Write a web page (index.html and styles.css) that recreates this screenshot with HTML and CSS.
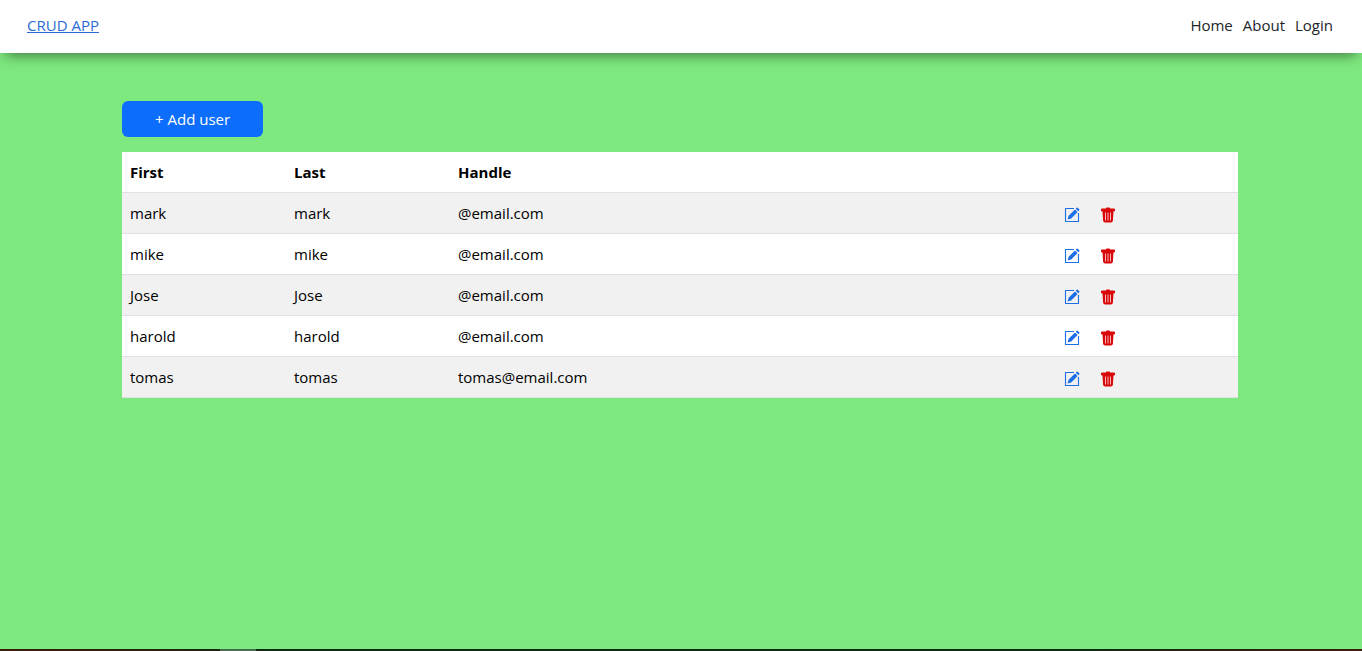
FILE: index.html
```html
<!DOCTYPE html>
<html lang="en">
<head>
<meta charset="utf-8">
<title>CRUD APP</title>
<link rel="stylesheet" href="styles.css">
</head>
<body>
<svg class="sprite" aria-hidden="true">
  <symbol id="edit" viewBox="0 0 16 16">
    <path d="M10 1.500H1.500v13h13V6" fill="none" stroke="currentColor" stroke-width="1.100" stroke-linejoin="round"/>
    <path d="M3.600 12.400l1-3.600L11 2.400l2.600 2.600-6.400 6.400zM11.700 1.700l1-1q.5-.4 1 0l1.600 1.600q.4.500 0 1l-1 1z" fill="currentColor"/>
  </symbol>
  <symbol id="trash" viewBox="0 0 16 16">
    <path d="M2 1.500h3.800q.2-1 1.200-1h2q1 0 1.200 1H14q1 0 1 1v1q0 1-1 1h-.5l-.6 9q-.1 2-2 2H5.100q-1.900 0-2-2l-.6-9H2q-1 0-1-1v-1q0-1 1-1z" fill="currentColor"/>
    <path d="M5.500 5.500v8M8 5.500v8M10.500 5.500v8" stroke="#f3b5b5" stroke-width="1"/>
  </symbol>
</svg>
<header class="navbar">
  <a class="brand" href="#">CRUD APP</a>
  <nav class="links">
    <a href="#">Home</a>
    <a href="#">About</a>
    <a href="#">Login</a>
  </nav>
</header>
<main class="content">
  <button class="add" type="button">+ Add user</button>
  <table class="users">
    <colgroup><col class="name"><col class="name"><col><col class="actions"></colgroup>
    <thead>
      <tr><th>First</th><th>Last</th><th>Handle</th><th></th></tr>
    </thead>
    <tbody>
      <tr><td>mark</td><td>mark</td><td>@email.com</td><td><div class="tools"><button class="edit" type="button" aria-label="Edit mark"><svg><use href="#edit"/></svg></button><button class="remove" type="button" aria-label="Delete mark"><svg><use href="#trash"/></svg></button></div></td></tr>
      <tr><td>mike</td><td>mike</td><td>@email.com</td><td><div class="tools"><button class="edit" type="button" aria-label="Edit mike"><svg><use href="#edit"/></svg></button><button class="remove" type="button" aria-label="Delete mike"><svg><use href="#trash"/></svg></button></div></td></tr>
      <tr><td>Jose</td><td>Jose</td><td>@email.com</td><td><div class="tools"><button class="edit" type="button" aria-label="Edit Jose"><svg><use href="#edit"/></svg></button><button class="remove" type="button" aria-label="Delete Jose"><svg><use href="#trash"/></svg></button></div></td></tr>
      <tr><td>harold</td><td>harold</td><td>@email.com</td><td><div class="tools"><button class="edit" type="button" aria-label="Edit harold"><svg><use href="#edit"/></svg></button><button class="remove" type="button" aria-label="Delete harold"><svg><use href="#trash"/></svg></button></div></td></tr>
      <tr><td>tomas</td><td>tomas</td><td>tomas@email.com</td><td><div class="tools"><button class="edit" type="button" aria-label="Edit tomas"><svg><use href="#edit"/></svg></button><button class="remove" type="button" aria-label="Delete tomas"><svg><use href="#trash"/></svg></button></div></td></tr>
    </tbody>
  </table>
</main>
<footer class="edge"></footer>
</body>
</html>
```
FILE: styles.css
```css
* { box-sizing: border-box; }

body {
  display: flex;
  flex-direction: column;
  min-height: 100vh;
  margin: 0;
  background: #7ee97e;
  color: #000;
  font: 15px/24px "Segoe UI", "Open Sans", sans-serif;
}

.sprite {
  position: absolute;
  width: 0;
  height: 0;
}

.navbar {
  display: flex;
  justify-content: space-between;
  padding: 13px 29px 16px 27px;
  background: #fff;
  box-shadow: 0 7px 14px -5px rgba(0, 0, 0, 0.5);
}

.brand { color: #2a6bd8; }

.links {
  display: flex;
  gap: 10px;
}

.links a {
  color: #212529;
  text-decoration: none;
}

.content {
  flex: 1;
  padding: 48px 124px 48px 122px;
}

.add {
  display: block;
  margin-bottom: 15px;
  padding: 6px 33px;
  border: 0;
  border-radius: 6px;
  background: #0d6efd;
  color: #fff;
  font: inherit;
}

.users {
  width: 100%;
  table-layout: fixed;
  border-collapse: separate;
  border-spacing: 0;
  background: #fff;
}

.name { width: 164px; }
.actions { width: 182px; }

.users th,
.users td {
  height: 41px;
  padding: 8px;
  border-bottom: 1px solid #dee2e6;
  text-align: left;
}

.users th {
  font-weight: 700;
}

.users tbody tr:nth-child(odd) { background: #f1f1f1; }

.tools {
  display: flex;
  gap: 20px;
  padding-top: 4px;
}

.tools button {
  display: flex;
  padding: 0;
  border: 0;
  background: none;
}

.tools svg {
  width: 16px;
  height: 16px;
}

.edit { color: #1c6fe8; }
.remove { color: #d90808; }

.edge {
  height: 2px;
  background: linear-gradient(90deg, transparent 220px, #4a6b50 220px 256px, transparent 256px), linear-gradient(90deg, #3a1c08, #0c2a14 20% 80%, #3a1c10);
}
```
